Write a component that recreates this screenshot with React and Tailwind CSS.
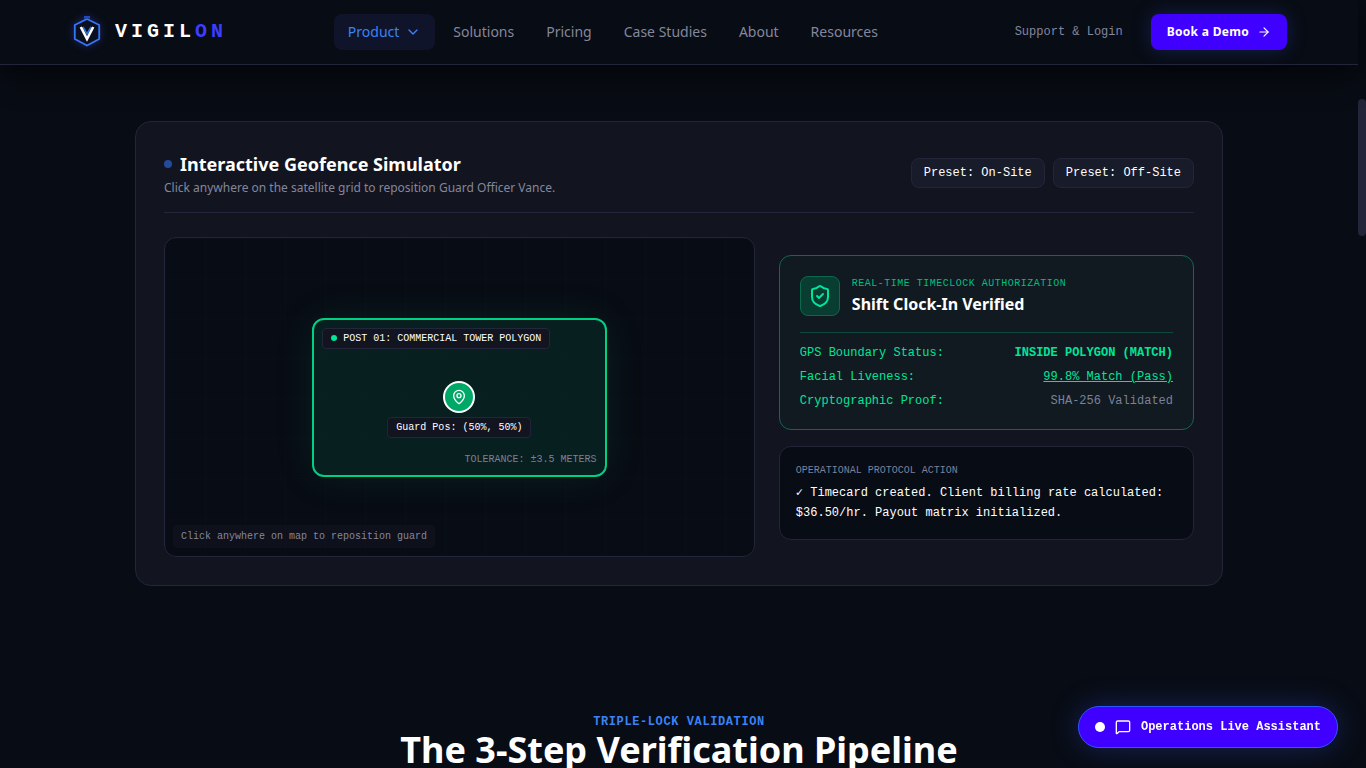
import { useState } from "react";
import { ArrowRight, ChevronDown, MapPin, MessageSquare, ShieldCheck } from "lucide-react";

const NAV_LINKS = ["Solutions", "Pricing", "Case Studies", "About", "Resources"];

const CHECKS = [
  { label: "GPS Boundary Status:", value: "INSIDE POLYGON (MATCH)", style: "font-bold text-[#00e599]" },
  { label: "Facial Liveness:", value: "99.8% Match (Pass)", style: "underline text-[#00e599]" },
  { label: "Cryptographic Proof:", value: "SHA-256 Validated", style: "text-[#7d8099]" },
];

function Logo() {
  return (
    <a href="#" className="flex items-center gap-3">
      <svg viewBox="0 0 32 32" className="size-8 drop-shadow-[0_0_4px_rgba(59,90,246,0.35)]" fill="none" aria-hidden="true">
        <path d="M16 3 28.2 9v14L16 29.6 3.800 23V9Z" fill="#0a1020" stroke="#3575fa" strokeWidth="1.8" />
        <rect x="13" y="0" width="6" height="2.6" fill="#2548b8" />
        <path d="m12 11 4 7 4-7" stroke="#2f6fd6" strokeWidth="1.6" />
        <path d="m9.800 11 6.200 12 6.200-12" stroke="#fff" strokeWidth="2.6" />
      </svg>
      <span className="font-['Liberation_Mono',monospace] text-xl font-bold tracking-[0.2em] text-white">
        VIGIL<span className="text-[#3d3dff]">ON</span>
      </span>
    </a>
  );
}

function Header() {
  return (
    <header className="relative z-10 border-b border-[#23253a] bg-[#080c14] shadow-[0_10px_30px_rgba(0,0,0,0.6)]">
      <div className="mx-auto flex h-16 max-w-7xl items-center justify-between px-8">
        <Logo />
        <nav className="flex items-center gap-1 text-sm text-[#84879c]">
          <button type="button" className="flex items-center gap-1.5 rounded-lg bg-[#0f142a] px-3.5 py-2 text-[#3b82f6]">
            Product
            <ChevronDown className="size-4" />
          </button>
          {NAV_LINKS.map((link) => (
            <a key={link} href="#" className="px-3.5 py-2">
              {link}
            </a>
          ))}
        </nav>
        <div className="flex items-center gap-3">
          <a href="#" className="px-4 py-2 font-['Liberation_Mono',monospace] text-xs text-[#84879c]">
            Support &amp; Login
          </a>
          <button
            type="button"
            className="flex h-9 items-center gap-2 rounded-lg bg-[#4000ff] px-4 text-xs font-bold tracking-wide text-white shadow-[0_0_20px_rgba(59,90,246,0.25)]"
          >
            Book a Demo
            <ArrowRight className="size-3.5" />
          </button>
        </div>
      </div>
    </header>
  );
}

function GeofenceMap({ pos, onMove }) {
  const handleClick = (e) => {
    const box = e.currentTarget.getBoundingClientRect();
    onMove({
      x: Math.round(((e.clientX - box.left) / box.width) * 100),
      y: Math.round(((e.clientY - box.top) / box.height) * 100),
    });
  };

  return (
    <div
      onClick={handleClick}
      className="relative col-span-7 h-80 cursor-crosshair overflow-hidden rounded-xl border border-[#23253a] bg-[#080c14] bg-[linear-gradient(to_right,rgba(255,255,255,0.006)_1px,transparent_1px),linear-gradient(to_bottom,rgba(255,255,255,0.006)_1px,transparent_1px)] bg-[size:40px_40px] font-['Liberation_Mono',monospace] text-[10px] leading-[15px]"
    >
      {/* Post polygon */}
      <div className="absolute inset-1/4 rounded-xl border-2 border-[#00d084] bg-[#00d084]/10 shadow-[0_0_40px_rgba(0,208,132,0.10)]">
        <div className="absolute top-2 left-2 flex items-center gap-1.5 rounded border border-[#23253a] bg-[#12141f] px-2 py-0.5 text-white">
          <span className="size-1.5 rounded-full bg-[#00e599]" />
          POST 01: COMMERCIAL TOWER POLYGON
        </div>
        <div className="absolute right-2 bottom-2 text-[#7d8099]">TOLERANCE: ±3.5 METERS</div>
      </div>

      {/* Guard marker */}
      <div className="absolute" style={{ left: `${pos.x}%`, top: `${pos.y}%` }}>
        <div className="absolute -top-4 -left-4 flex size-8 items-center justify-center rounded-full border-2 border-white bg-[#00a868] text-white">
          <MapPin className="size-4" />
        </div>
        <div className="absolute top-5 -translate-x-1/2 rounded border border-[#23253a] bg-[#12141f] px-2 py-0.5 whitespace-nowrap text-white">
          Guard Pos: ({pos.x}%, {pos.y}%)
        </div>
      </div>

      <div className="absolute bottom-2 left-2 rounded bg-[#12141f]/60 px-2 py-1 text-[#84879c]">
        Click anywhere on map to reposition guard
      </div>
    </div>
  );
}

function StatusPanel() {
  return (
    <div className="col-span-5 flex flex-col justify-center gap-4 font-['Liberation_Mono',monospace]">
      <div className="rounded-xl border border-[#066e50] bg-[#101a20] p-5">
        <div className="flex items-center gap-3 border-b border-[#0b4a3d] pb-4">
          <div className="flex size-10 items-center justify-center rounded-lg border border-[#08694c] bg-[#0a3d31] text-[#00e599]">
            <ShieldCheck className="size-6" />
          </div>
          <div>
            <p className="text-[10px] leading-4 tracking-wider text-[#00bf82]">REAL-TIME TIMECLOCK AUTHORIZATION</p>
            <h4 className="font-['Noto_Sans',sans-serif] text-base font-bold text-white">Shift Clock-In Verified</h4>
          </div>
        </div>
        <dl className="space-y-2 pt-3 text-xs">
          {CHECKS.map((check) => (
            <div key={check.label} className="flex justify-between">
              <dt className="text-[#00e599]">{check.label}</dt>
              <dd className={check.style}>{check.value}</dd>
            </div>
          ))}
        </dl>
      </div>

      <div className="rounded-xl border border-[#23253a] bg-[#080c14] p-4">
        <p className="text-[10px] leading-[15px] text-[#7d8099]">OPERATIONAL PROTOCOL ACTION</p>
        <p className="mt-[5px] text-xs leading-5 text-white">
          ✓ Timecard created. Client billing rate calculated: $36.50/hr. Payout matrix initialized.
        </p>
      </div>
    </div>
  );
}

function Simulator() {
  const [pos, setPos] = useState({ x: 50, y: 50 });
  const presetClass =
    "rounded-lg border border-[#23253a] bg-[#181b29] px-3 py-1.5 font-['Liberation_Mono',monospace] text-xs text-white";

  return (
    <section className="mx-auto max-w-6xl px-8 pt-14 pb-16">
      <div className="rounded-2xl border border-[#23253a] bg-[#12141f] p-7">
        <div className="mb-6 flex items-center justify-between border-b border-[#23253a] pb-4">
          <div>
            <h3 className="flex items-center gap-2 text-lg font-bold text-white">
              <span className="size-2 rounded-full bg-[#234a9c]" />
              Interactive Geofence Simulator
            </h3>
            <p className="mt-0.5 text-xs text-[#84879c]">
              Click anywhere on the satellite grid to reposition Guard Officer Vance.
            </p>
          </div>
          <div className="flex gap-2">
            <button type="button" className={presetClass} onClick={() => setPos({ x: 50, y: 50 })}>
              Preset: On-Site
            </button>
            <button type="button" className={presetClass} onClick={() => setPos({ x: 85, y: 15 })}>
              Preset: Off-Site
            </button>
          </div>
        </div>
        <div className="grid grid-cols-12 gap-6">
          <GeofenceMap pos={pos} onMove={setPos} />
          <StatusPanel />
        </div>
      </div>
    </section>
  );
}

export default function App() {
  return (
    <div className="flex h-screen overflow-hidden bg-[#080c14] font-['Noto_Sans',sans-serif]">
      <div className="min-w-0 flex-1">
        <Header />
        <main>
          <Simulator />
          <section className="px-8 pt-16 text-center">
            <p className="font-['Liberation_Mono',monospace] text-xs font-bold tracking-wider text-[#3b82f6]">
              TRIPLE-LOCK VALIDATION
            </p>
            <h2 className="text-4xl font-bold text-white">The 3-Step Verification Pipeline</h2>
          </section>
        </main>
      </div>

      {/* Scroll track */}
      <div className="w-2 shrink-0 pt-[99px]">
        <div className="h-[137px] rounded-full bg-[#23253a]" />
      </div>

      <button
        type="button"
        className="fixed right-7 bottom-5 z-20 flex items-center gap-2.5 rounded-full border border-[#2f55ff] bg-[#4000ff] px-4 py-3 font-['Liberation_Mono',monospace] text-xs font-bold text-white shadow-[0_0_30px_rgba(59,90,246,0.3)]"
      >
        <span className="size-2.5 rounded-full bg-white" />
        <MessageSquare className="size-4" />
        Operations Live Assistant
      </button>
    </div>
  );
}
